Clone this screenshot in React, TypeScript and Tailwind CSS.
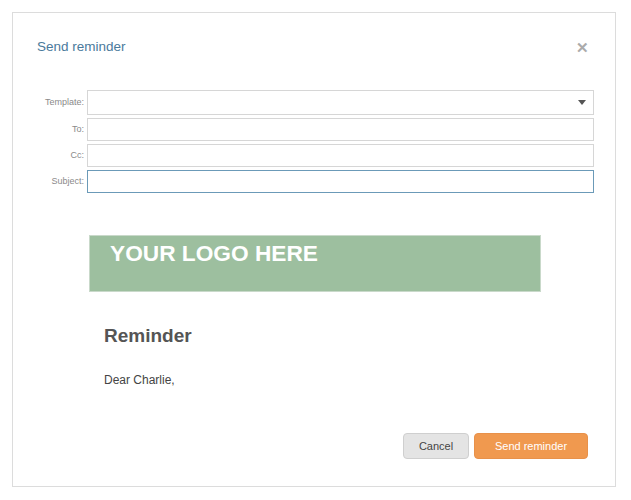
import { ChangeEvent, useState } from 'react'

const labelCls = 'w-[74px] shrink-0 pr-[3px] text-right text-[9px] text-[#8a8a8a]'
const inputCls = 'h-full w-full border border-[#d6d6d6] bg-white px-2 text-[12px] text-[#444] outline-none'

function Field({ label, value, onChange, focused }: {
  label: string
  value: string
  onChange: (e: ChangeEvent<HTMLInputElement>) => void
  focused?: boolean
}) {
  return (
    <div className="flex h-[23px] items-center">
      <span className={labelCls}>{label}</span>
      <input
        value={value}
        onChange={onChange}
        className={focused ? 'h-full w-full border border-[#6b9ab8] bg-white px-2 text-[12px] text-[#444] outline-none' : inputCls}
      />
    </div>
  )
}

export default function App() {
  const [to, setTo] = useState('')
  const [cc, setCc] = useState('')
  const [subject, setSubject] = useState('')

  return (
    <div className="h-[500px] w-[631px] bg-white pl-[12px] pt-[12px] font-['Liberation_Sans',Arial,sans-serif]">
      <div className="flex h-[475px] w-[604px] flex-col border border-[#dcdcdc] bg-white">
        {/* Header */}
        <div className="flex h-[68px] items-center justify-between pl-[24px] pr-[26px]">
          <h2 className="text-[13.5px] text-[#4a7a9c]">Send reminder</h2>
          <button className="text-[15px] font-bold leading-none text-[#ababab]">✕</button>
        </div>

        {/* Form */}
        <div className="mt-[9px] flex flex-col gap-[3px] pr-[21px]">
          <div className="flex h-[25px] items-center">
            <span className={labelCls}>Template:</span>
            <div className="flex h-full w-full items-center justify-end border border-[#d6d6d6] pr-[7px]">
              <svg width="8" height="5" viewBox="0 0 8 5">
                <path d="M0 0h8L4 5z" fill="#555" />
              </svg>
            </div>
          </div>
          <Field label="To:" value={to} onChange={e => setTo(e.target.value)} />
          <Field label="Cc:" value={cc} onChange={e => setCc(e.target.value)} />
          <Field label="Subject:" value={subject} onChange={e => setSubject(e.target.value)} focused />
        </div>

        {/* Email preview */}
        <div className="mt-[42px] pl-[76px]">
          <div className="h-[57px] w-[452px] border border-[#c9d9ca] bg-[#9dbf9f] pl-[20px] pt-[3px]">
            <p className="text-[22.7px] font-bold leading-[28px] text-white">YOUR LOGO HERE</p>
          </div>
          <h3 className="mt-[30px] pl-[15px] text-[19px] font-bold text-[#555]">Reminder</h3>
          <p className="mt-[20px] pl-[15px] text-[12px] text-[#444]">Dear Charlie,</p>
        </div>

        {/* Footer */}
        <div className="mt-auto mb-[27px] flex justify-end gap-[5px] pr-[27px]">
          <button className="h-[26px] w-[66px] rounded-[4px] border border-[#cfcfcf] bg-[#e4e4e4] text-[11px] text-[#444]">
            Cancel
          </button>
          <button className="h-[26px] w-[114px] rounded-[4px] border border-[#e8914a] bg-[#f0994f] text-[11px] text-white">
            Send reminder
          </button>
        </div>
      </div>
    </div>
  )
}
